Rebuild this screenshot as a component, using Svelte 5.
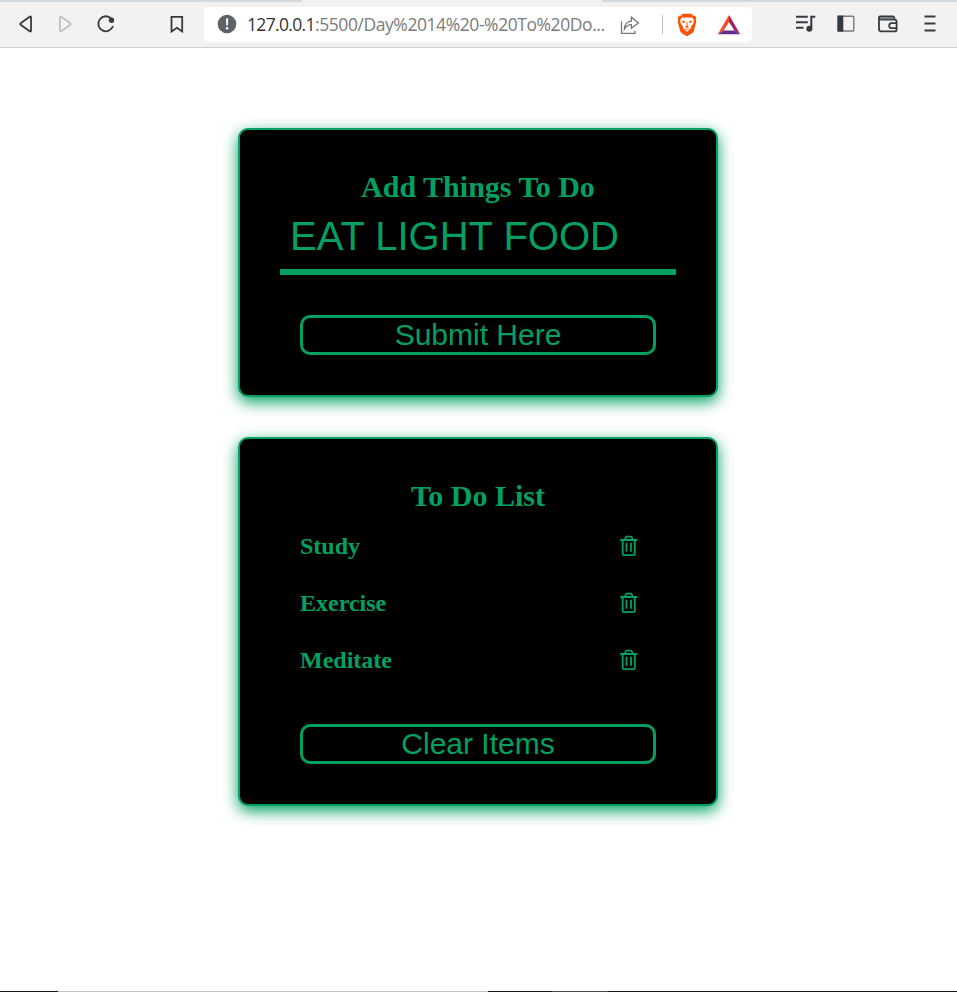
<script>
  let entry = $state('EAT LIGHT FOOD');
  let items = $state(['Study', 'Exercise', 'Meditate']);

  function add() {
    if (entry.trim()) items.push(entry.trim());
    entry = '';
  }
</script>

<div class="page">
  <header>
    <div class="tabs"></div>
    <nav class="toolbar">
      <svg class="ic back" viewBox="0 0 24 24"><path d="M17 5.3v13.4q0 1.3-1.2.6L6.9 13q-1.2-1 0-2l8.900-6.300q1.200-.7 1.200.6z" /></svg>
      <svg class="ic fwd" viewBox="0 0 24 24"><path d="M7 5.300v13.400q0 1.300 1.200.6l8.900-6.300q1.200-1 0-2L8.200 4.700Q7 4 7 5.300z" /></svg>
      <svg class="ic reload" viewBox="0 0 24 24"><path d="M17.300 6.600A7.500 7.500 0 1 0 19 14" /><circle cx="17.500" cy="8.300" r="2.700" class="solid" /></svg>
      <svg class="ic mark" viewBox="0 0 24 24"><path d="M6.500 4.900h10.700v14.600l-5.300-3.700-5.400 3.700z" /></svg>

      <div class="address">
        <svg class="info" viewBox="0 0 20 20"><circle cx="10" cy="10" r="9.300" /><path d="M9 4.500h2.200l-.3 7H9.300z" fill="#fff" /><circle cx="10.100" cy="14.300" r="1.200" fill="#fff" /></svg>
        <div class="url"><span class="host">127.0.0.1</span><span class="path">:5500/Day%2014%20-%20To%20Do...</span></div>
        <svg class="share" viewBox="0 0 22 22"><path d="M2.500 7.200v12.200h13.500v-2.700M5.400 15.200c.3-5 2.700-7.700 7-8V3.200l6.900 5.700-6.900 5.300v-3.500c-3 0-5 1.400-7 4.500z" /></svg>
        <i class="sep"></i>
        <svg class="brave" viewBox="0 0 20 24">
          <path d="M5.600.8h8.800l1.700 1.900h1.800l1.500 2.500-.6 1.900.5 1.500-2.300 8.900c-.4 1.400-1.200 2.200-2.200 2.900L10 23.300l-4.800-2.900c-1-.7-1.800-1.500-2.200-2.900L.7 8.600l.5-1.500-.6-1.900 1.500-2.500h1.800z" fill="#fb5204" />
          <path d="M5 4.200l2.500.5L10 4.200l2.500.5 2.500-.5 2 3-.8 3.500-2.500 3.200.5 1.300L10 18.800l-4.200-3.600.5-1.300-2.500-3.200L3 7.200z" fill="#fff" />
          <path d="M4.800 7.600l3.500 1-.9 1.500-2-.9zM15.200 7.600l-3.500 1 .9 1.500 2-.9zM9.500 9h1v3.800l1.500.9-2 1.400-2-1.400 1.500-.9zM7.200 15.200l2.800 1 2.800-1-.5 1-2.300.9-2.300-.9z" fill="#fb5204" />
        </svg>
        <svg class="bat" viewBox="0 0 24 22">
          <path d="M12 1v7L6.600 16.500.8 20.300z" fill="#ff4724" />
          <path d="M12 1l11.200 19.300-5.800-3.800L12 8z" fill="#9e1f63" />
          <path d="M.8 20.300l5.800-3.800h10.800l5.800 3.800z" fill="#662d91" />
        </svg>
      </div>

      <svg class="ic music" viewBox="0 0 24 24"><path d="M3 4.800h11.800M3 10.300h11.800M3 15.700h7.500M18.300 16.700V4.800h4" stroke-width="2" /><circle cx="16.300" cy="16.700" r="3" class="solid" /></svg>
      <svg class="ic side" viewBox="0 0 24 24"><rect x="4" y="4.300" width="15.800" height="14.700" rx=".8" stroke="#777b7f" stroke-width="1.400" /><path d="M3.500 3.600h5.800v16H3.500z" class="solid" /></svg>
      <svg class="ic wallet" viewBox="0 0 24 24"><path d="M3 5v12q0 2.400 2.400 2.400h13.200q2 0 2-2V9.600q0-2-2-2H5.500Q3 7.600 3 5.300q0-.8 1-.8h12.800q1.700 0 1.700 3" /><path d="M4 5.300h13.500v2H5z" fill="#777b7f" stroke="none" /><path d="M20.500 11.200h-4.800a2.500 2.500 0 0 0 0 5h4.800" /></svg>
      <svg class="ic menu" viewBox="0 0 24 24"><path d="M6.500 4.500h11M6.500 11.500h11M6.500 18.500h11" /></svg>
    </nav>
  </header>

  <main>
    <section class="card">
      <h2>Add Things To Do</h2>
      <input type="text" bind:value={entry} aria-label="New item" />
      <button onclick={add}>Submit Here</button>
    </section>

    <section class="card">
      <h2>To Do List</h2>
      <ul>
        {#each items as item, i}
          <li>
            <span>{item}</span>
            <svg class="trash" viewBox="0 0 18 22" role="presentation" onclick={() => items.splice(i, 1)}>
              <path d="M.2 5h17M2.700 5v14q0 1.200 1.200 1.200h9.700q1.200 0 1.200-1.200V5M4.800 4.600l.9-2.100q.3-.8 1.200-.8h3.800q.9 0 1.200.8l.9 2.100M6.500 7.800v9M11 7.800v9" />
            </svg>
          </li>
        {/each}
      </ul>
      <button onclick={() => (items = [])}>Clear Items</button>
    </section>
  </main>

  <footer></footer>
</div>

<style>
  .page {
    height: 992px;
    display: flex;
    flex-direction: column;
    background: #fff;
    overflow: hidden;
  }
  header {
    height: 48px;
    box-sizing: border-box;
    background: #f2f2f2;
    border-bottom: 1px solid #d1d1d1;
  }
  .tabs {
    height: 2px;
    background: linear-gradient(90deg, #d3d8dc 302px, #f2f2f2 302px, #f2f2f2 602px, #d3d8dc 602px);
  }
  .toolbar {
    display: flex;
    align-items: center;
    height: 45px;
  }
  svg {
    display: block;
    flex: none;
  }
  .ic {
    width: 24px;
    height: 24px;
    margin-top: -1px;
    fill: none;
    stroke: #373b40;
    stroke-width: 1.8;
  }
  .ic .solid {
    fill: #373b40;
    stroke: none;
  }
  .back { margin-left: 14px; }
  .fwd { margin-left: 15px; stroke: #bfc0c1; }
  .reload { margin-left: 17px; }
  .mark { margin-left: 47px; }
  .address {
    display: flex;
    align-items: center;
    box-sizing: border-box;
    width: 548px;
    height: 35px;
    margin-left: 15px;
    padding-left: 13px;
    background: #fff;
    border-radius: 5px;
  }
  .info {
    width: 20px;
    height: 20px;
    margin-top: -1px;
    fill: #5f6368;
  }
  .url {
    display: flex;
    width: 362px;
    margin: -2px 0 0 10px;
    font: 400 17.5px/24px "Open Sans", "Noto Sans", sans-serif;
    white-space: nowrap;
  }
  .host { width: 68px; color: #333; letter-spacing: -0.68px; }
  .path { color: #7c7c7c; letter-spacing: -0.43px; }
  .share {
    width: 22px;
    height: 22px;
    margin-left: 10px;
    fill: none;
    stroke: #777;
    stroke-width: 1.3;
  }
  .sep {
    width: 1px;
    height: 19px;
    margin-left: 21px;
    background: #c4c4c4;
  }
  .brave { width: 20px; height: 24px; margin-left: 14px; }
  .bat { width: 24px; height: 22px; margin-left: 20px; }
  .music { margin-left: 41px; }
  .side { margin-left: 17px; }
  .wallet { margin-left: 18px; }
  .menu { margin-left: 18px; }

  main {
    flex: 1;
    display: flex;
    flex-direction: column;
    align-items: center;
    gap: 40px;
    padding: 80px 1px 0 0;
  }
  .card {
    display: flex;
    flex-direction: column;
    box-sizing: border-box;
    width: 480px;
    padding: 40px;
    background: #000;
    color: #03a062;
    border: 2px solid #03a062;
    border-radius: 10px;
    box-shadow: 0 5px 15px #03a062;
  }
  h2 {
    margin: 0;
    font: bold 30px/34px "Liberation Serif", "Times New Roman", serif;
    text-align: center;
  }
  input {
    box-sizing: border-box;
    height: 71px;
    padding: 0 10px;
    border: 0;
    border-bottom: 6px solid #03a062;
    outline: 0;
    background: #000;
    color: inherit;
    font: 40px "Liberation Sans", Arial, sans-serif;
  }
  button {
    height: 40px;
    margin: 40px 20px 0;
    padding: 0;
    border: 3px solid #03a062;
    border-radius: 10px;
    background: #000;
    color: inherit;
    font: 30px/34px "Liberation Sans", Arial, sans-serif;
  }
  ul {
    display: flex;
    flex-direction: column;
    gap: 30px;
    margin: 0;
    padding: 20px 38px 10px 20px;
    list-style: none;
  }
  li {
    display: flex;
    justify-content: space-between;
    height: 27px;
    font: bold 24px/27px "Liberation Serif", "Times New Roman", serif;
  }
  .trash {
    width: 18px;
    height: 22px;
    margin-top: 2px;
    fill: none;
    stroke: #03a062;
    stroke-width: 1.8;
  }
  footer {
    height: 1px;
    background: linear-gradient(90deg, #191919 58px, #c2c2c2 58px, #c2c2c2 488px, #191919 488px, #191919 552px, #4a4a4a 552px, #4a4a4a 608px, #191919 608px);
  }
</style>
